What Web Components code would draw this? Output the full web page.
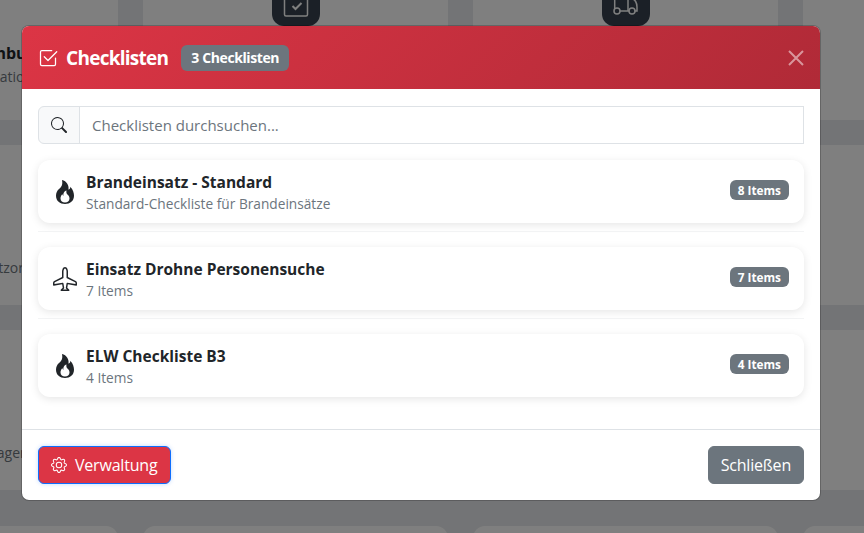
<!DOCTYPE html>
<html lang="de">
<head>
<meta charset="utf-8">
<title>Checklisten</title>
<style>
  html, body { margin: 0; height: 100%; overflow: hidden; }
  body { font-family: "Open Sans", "Noto Sans", sans-serif; }
</style>
</head>
<body>
<app-page>
  <tile-grid>
    <tile-card title="Mein Fahrtenbuch" text="Fahrtdokumentation" title-nudge="13" shift="1"></tile-card>
    <tile-card icon="clipboard"></tile-card>
    <tile-card icon="truck"></tile-card>
    <tile-card></tile-card>
    <tile-card text="Liste der Einsatzorte" shift="9" nudge="10"></tile-card>
    <tile-card></tile-card>
    <tile-card></tile-card>
    <tile-card></tile-card>
    <tile-card text="Einsatz-Vorlagen" shift="9" nudge="18"></tile-card>
    <tile-card></tile-card>
    <tile-card></tile-card>
    <tile-card></tile-card>
  </tile-grid>
  <tile-grid>
    <tile-card></tile-card>
    <tile-card></tile-card>
    <tile-card></tile-card>
    <tile-card></tile-card>
  </tile-grid>
</app-page>
<modal-backdrop></modal-backdrop>
<checklist-modal count="3 Checklisten">
  <checklist-item icon="fire" title="Brandeinsatz - Standard" text="Standard-Checkliste für Brandeinsätze" badge="8 Items"></checklist-item>
  <checklist-item icon="airplane" title="Einsatz Drohne Personensuche" text="7 Items" badge="7 Items"></checklist-item>
  <checklist-item icon="fire" title="ELW Checkliste B3" text="4 Items" badge="4 Items" last></checklist-item>
</checklist-modal>

<script>
const ICONS = {
  check: '<path d="M3 14.5A1.5 1.5 0 0 1 1.5 13V3A1.5 1.5 0 0 1 3 1.5h8a.5.5 0 0 1 0 1H3a.5.5 0 0 0-.5.5v10a.5.5 0 0 0 .5.5h10a.5.5 0 0 0 .5-.5V8a.5.5 0 0 1 1 0v5a1.5 1.5 0 0 1-1.5 1.5z"/><path d="m8.354 10.354 7-7a.5.5 0 0 0-.708-.708L8 9.293 5.354 6.646a.5.5 0 1 0-.708.708l3 3a.5.5 0 0 0 .708 0"/>',
  search: '<path d="M11.742 10.344a6.5 6.5 0 1 0-1.397 1.398h-.001q.044.06.098.115l3.85 3.85a1 1 0 0 0 1.415-1.414l-3.85-3.85a1 1 0 0 0-.115-.1zM12 6.5a5.5 5.5 0 1 1-11 0 5.5 5.5 0 0 1 11 0"/>',
  fire: '<path d="M8 16c3.314 0 6-2 6-5.5 0-1.5-.5-4-2.5-6 .25 1.5-1.25 2-1.25 2C11 4 9 .5 6 0c.357 2 .5 4-2 6-1.25 1-2 2.729-2 4.5C2 14 4.686 16 8 16m0-1c-1.657 0-3-1-3-2.75 0-.75.25-2 1.25-3C6.125 10 7 10.5 7 10.5c-.375-1.25.5-3.25 2-3.5-.179 1-.25 2 1 3 .625.5 1 1.364 1 2.25C11 14 9.657 15 8 15"/>',
  airplane: '<path d="M6.428 1.151C6.708.591 7.213 0 8 0s1.292.592 1.572 1.151C9.861 1.73 10 2.431 10 3v3.691l5.17 2.585a1.5 1.5 0 0 1 .83 1.342V12a.5.5 0 0 1-.582.493l-5.507-.918-.375 2.253 1.318 1.318A.5.5 0 0 1 10.5 16h-5a.5.5 0 0 1-.354-.854l1.319-1.318-.376-2.253-5.507.918A.5.5 0 0 1 0 12v-1.382a1.5 1.5 0 0 1 .83-1.342L6 6.691V3c0-.568.14-1.271.428-1.849m.894.448C7.111 2.02 7 2.569 7 3v4a.5.5 0 0 1-.276.447l-5.448 2.724a.5.5 0 0 0-.276.447v.792l5.418-.903a.5.5 0 0 1 .575.41l.5 3a.5.5 0 0 1-.14.437L6.708 15h2.586l-.647-.646a.5.5 0 0 1-.14-.436l.5-3a.5.5 0 0 1 .576-.411L15 11.41v-.792a.5.5 0 0 0-.276-.447L9.276 7.447A.5.5 0 0 1 9 7V3c0-.432-.11-.979-.322-1.401C8.458 1.159 8.213 1 8 1s-.458.158-.678.599"/>',
  gear: '<path d="M8 4.754a3.246 3.246 0 1 0 0 6.492 3.246 3.246 0 0 0 0-6.492M5.754 8a2.246 2.246 0 1 1 4.492 0 2.246 2.246 0 0 1-4.492 0"/><path d="M9.796 1.343c-.527-1.79-3.065-1.79-3.592 0l-.094.319a.873.873 0 0 1-1.255.52l-.292-.16c-1.64-.892-3.433.902-2.54 2.541l.159.292a.873.873 0 0 1-.52 1.255l-.319.094c-1.79.527-1.79 3.065 0 3.592l.319.094a.873.873 0 0 1 .52 1.255l-.16.292c-.892 1.64.901 3.434 2.541 2.54l.292-.159a.873.873 0 0 1 1.255.52l.094.319c.527 1.79 3.065 1.79 3.592 0l.094-.319a.873.873 0 0 1 1.255-.52l.292.16c1.64.893 3.434-.902 2.54-2.541l-.159-.292a.873.873 0 0 1 .52-1.255l.319-.094c1.79-.527 1.79-3.065 0-3.592l-.319-.094a.873.873 0 0 1-.52-1.255l.16-.292c.893-1.64-.902-3.433-2.541-2.54l-.292.159a.873.873 0 0 1-1.255-.52zm-2.633.283c.246-.835 1.428-.835 1.674 0l.094.319a1.873 1.873 0 0 0 2.693 1.115l.291-.16c.764-.415 1.6.42 1.184 1.185l-.159.292a1.873 1.873 0 0 0 1.116 2.692l.318.094c.835.246.835 1.428 0 1.674l-.319.094a1.873 1.873 0 0 0-1.115 2.693l.16.291c.415.764-.42 1.6-1.185 1.184l-.291-.159a1.873 1.873 0 0 0-2.693 1.116l-.094.318c-.246.835-1.428.835-1.674 0l-.094-.319a1.873 1.873 0 0 0-2.692-1.115l-.292.16c-.764.415-1.6-.42-1.184-1.185l.159-.291A1.873 1.873 0 0 0 1.945 8.93l-.319-.094c-.835-.246-.835-1.428 0-1.674l.319-.094A1.873 1.873 0 0 0 3.06 4.377l-.16-.292c-.415-.764.42-1.6 1.185-1.184l.292.159a1.873 1.873 0 0 0 2.692-1.115z"/>'
};

function icon(name, size) {
  return `<svg xmlns="http://www.w3.org/2000/svg" width="${size}" height="${size}" viewBox="0 0 16 16" fill="currentColor">${ICONS[name]}</svg>`;
}

// the page behind the modal
class AppPage extends HTMLElement {
  constructor() {
    super();
    this.attachShadow({ mode: 'open' });
    this.shadowRoot.innerHTML = `
      <style>
        :host { display: block; height: 533px; overflow: hidden; background: #e7e9ec; }
        .wrap {
          display: flex;
          flex-direction: column;
          gap: 36px;
          margin: -40px 0 0 -187px;
          width: 1295px;
        }
      </style>
      <div class="wrap"><slot></slot></div>`;
  }
}

class TileGrid extends HTMLElement {
  constructor() {
    super();
    this.attachShadow({ mode: 'open' });
    this.shadowRoot.innerHTML = `
      <style>
        :host {
          display: grid;
          grid-template-columns: repeat(4, 305px);
          grid-auto-rows: 160px;
          gap: 25px;
        }
      </style>
      <slot></slot>`;
  }
}

class TileCard extends HTMLElement {
  constructor() {
    super();
    this.attachShadow({ mode: 'open' });
  }
  connectedCallback() {
    const kind = this.getAttribute('icon');
    const shift = this.getAttribute('shift') || 0;
    const nudge = this.getAttribute('nudge') || 0;
    const titleNudge = this.getAttribute('title-nudge') || 0;
    let glyph = '';
    if (kind === 'clipboard') {
      glyph = '<rect x="12.5" y="3" width="23" height="35" rx="1.5"/><path d="M20.5 28l3 3 6-6" stroke-width="2"/>';
    }
    if (kind === 'truck') {
      glyph = '<path d="M12.7 18v13M18 33h9M26 18v15M26 21h4c3 0 5 4 5 8v4h-2"/><circle cx="15" cy="33" r="3"/><circle cx="30" cy="33" r="3"/>';
    }
    this.shadowRoot.innerHTML = `
      <style>
        :host {
          display: block;
          background: #fff;
          border-radius: 12px;
          padding: 18px;
          text-align: center;
          box-sizing: border-box;
          overflow: hidden;
          white-space: nowrap;
        }
        .box { width: 48px; height: 48px; margin: 0 auto 16px; border-radius: 12px; background: #36414f; }
        .box svg { display: block; fill: none; stroke: #fff; stroke-width: 1.5; }
        h3 { margin: 0 0 3px; padding-left: ${titleNudge}px; font-size: 16px; line-height: 22px; font-weight: 700; color: #212529; }
        p { margin: ${shift}px 0 0; padding-left: ${nudge}px; font-size: 14px; line-height: 20px; color: #6c757d; }
      </style>
      <div class="box">${glyph ? `<svg width="48" height="48" viewBox="0 0 48 48">${glyph}</svg>` : ''}</div>
      <h3>${this.getAttribute('title') || '&nbsp;'}</h3>
      <p>${this.getAttribute('text') || ''}</p>`;
  }
}

class ModalBackdrop extends HTMLElement {
  constructor() {
    super();
    this.attachShadow({ mode: 'open' });
    this.shadowRoot.innerHTML = `
      <style>:host { position: absolute; inset: 0; background: rgba(0,0,0,.5); }</style>`;
  }
}

class ChecklistItem extends HTMLElement {
  constructor() {
    super();
    this.attachShadow({ mode: 'open' });
  }
  connectedCallback() {
    const last = this.hasAttribute('last');
    this.shadowRoot.innerHTML = `
      <style>
        :host {
          display: block;
          padding-bottom: ${last ? 0 : 8}px;
          margin-bottom: ${last ? 0 : 15}px;
          ${last ? '' : 'border-bottom: 1px solid #f3f4f5;'}
        }
        .card {
          display: flex;
          align-items: center;
          height: 63px;
          padding: 0 15px;
          box-sizing: border-box;
          background: #fff;
          border-radius: 12px;
          box-shadow: 0 2px 8px rgba(0,0,0,.1);
        }
        svg { flex: none; margin-right: 9px; color: #212529; }
        .main { flex: 1; padding-top: 1px; }
        h6 { margin: 0 0 3px; font-size: 15.5px; line-height: 20px; font-weight: 700; color: #212529; }
        small { display: block; font-size: 13.7px; line-height: 18px; color: #6c757d; }
        .badge {
          height: 20px;
          line-height: 20px;
          margin-top: -3px;
          padding: 0 8px;
          border-radius: 6px;
          background: #6c757d;
          color: #fff;
          font-size: 11.8px;
          font-weight: 700;
        }
      </style>
      <div class="card">
        ${icon(this.getAttribute('icon'), 24)}
        <div class="main">
          <h6>${this.getAttribute('title')}</h6>
          <small>${this.getAttribute('text')}</small>
        </div>
        <span class="badge">${this.getAttribute('badge')}</span>
      </div>`;
  }
}

class ChecklistModal extends HTMLElement {
  constructor() {
    super();
    this.attachShadow({ mode: 'open' });
  }
  connectedCallback() {
    this.shadowRoot.innerHTML = `
      <style>
        :host {
          position: absolute;
          left: 21px;
          top: 25px;
          width: 800px;
          height: 476px;
          box-sizing: border-box;
          display: flex;
          flex-direction: column;
          background: #fff;
          border: 1px solid rgba(0,0,0,.2);
          border-radius: 8px;
          background-clip: padding-box;
        }
        header {
          display: flex;
          align-items: center;
          height: 63px;
          padding: 0 16px;
          color: #fff;
          background: linear-gradient(135deg, #dc3545, #b02a37);
          border-radius: 7px 7px 0 0;
          box-sizing: border-box;
          flex: none;
        }
        header svg { margin-right: 8px; }
        h5 { margin: 0; font-size: 19px; line-height: 24px; font-weight: 700; letter-spacing: -.73px; white-space: nowrap; }
        .count {
          margin-left: 13px;
          height: 26px;
          line-height: 26px;
          padding: 0 10px;
          border-radius: 6px;
          background: #6c757d;
          font-size: 14px;
          font-weight: 700;
          letter-spacing: -.4px;
        }
        .close { margin-left: auto; margin-right: 0; color: #fff; opacity: .5; display: block; }
        .body { flex: 1; padding: 17px 16px 0; }
        .search { display: flex; height: 38px; margin-bottom: 16px; }
        .addon {
          width: 42px;
          box-sizing: border-box;
          display: flex;
          align-items: center;
          justify-content: center;
          background: #f8f9fa;
          border: 1px solid #dee2e6;
          border-radius: 6px 0 0 6px;
          color: #212529;
        }
        .input {
          flex: 1;
          margin-left: -1px;
          border: 1px solid #dee2e6;
          padding: 0 12px;
          font-size: 15px;
          line-height: 36px;
          color: #6c757d;
        }
        footer {
          flex: none;
          height: 71px;
          box-sizing: border-box;
          border-top: 1px solid #dee2e6;
          padding: 16px;
          display: flex;
          justify-content: space-between;
          align-items: flex-start;
        }
        .btn {
          height: 38px;
          box-sizing: border-box;
          display: flex;
          align-items: center;
          gap: 8px;
          padding: 0 12px;
          border-radius: 6px;
          color: #fff;
          font-size: 16px;
          letter-spacing: -.2px;
        }
        .danger { background: #dc3545; border: 1px solid #0d6efd; box-shadow: 0 0 4px rgba(13,110,253,.25); padding-right: 13px; }
        .secondary { background: #6c757d; border: 1px solid #6c757d; }
      </style>
      <header>
        ${icon('check', 20)}
        <h5>Checklisten</h5>
        <span class="count">${this.getAttribute('count')}</span>
        <svg class="close" width="16" height="16" viewBox="0 0 16 16" fill="none" stroke="currentColor" stroke-width="2"><path d="M1 1l14 14M15 1L1 15"/></svg>
      </header>
      <div class="body">
        <div class="search">
          <span class="addon">${icon('search', 16)}</span>
          <div class="input">Checklisten durchsuchen...</div>
        </div>
        <slot></slot>
      </div>
      <footer>
        <div class="btn danger">${icon('gear', 16)}<span>Verwaltung</span></div>
        <div class="btn secondary">Schließen</div>
      </footer>`;
  }
}

customElements.define('app-page', AppPage);
customElements.define('tile-grid', TileGrid);
customElements.define('tile-card', TileCard);
customElements.define('modal-backdrop', ModalBackdrop);
customElements.define('checklist-item', ChecklistItem);
customElements.define('checklist-modal', ChecklistModal);
</script>
</body>
</html>
